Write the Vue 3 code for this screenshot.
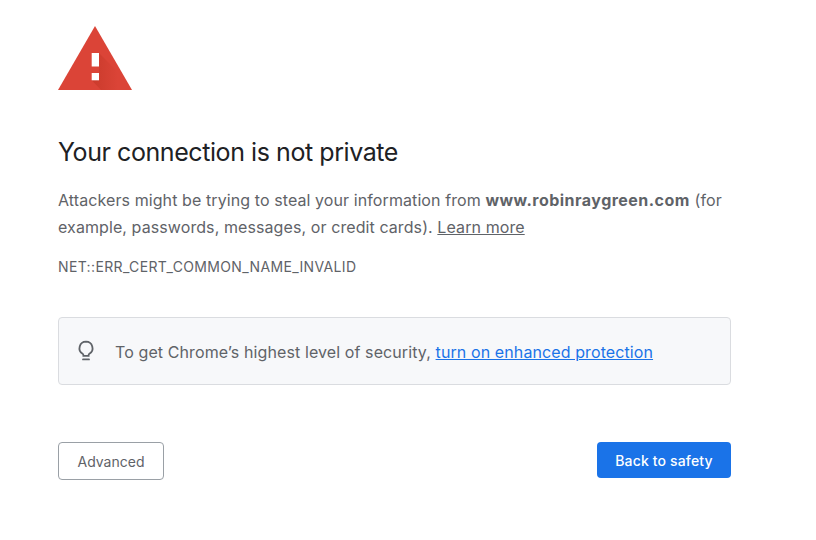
<script setup>
const domain = 'www.robinraygreen.com'
const errorCode = 'NET::ERR_CERT_COMMON_NAME_INVALID'
</script>

<template>
  <div class="page">
    <svg class="warning" width="74" height="64" viewBox="0 0 74 64">
      <defs>
        <linearGradient id="bangShadow" x1="0" y1="0" x2="1" y2="0">
          <stop offset="0" stop-color="#a52714" stop-opacity="0.32" />
          <stop offset="1" stop-color="#a52714" stop-opacity="0" />
        </linearGradient>
      </defs>
      <path d="M37 0 L74 64 L0 64 Z" fill="#db4437" />
      <path d="M41 27 L60 46 L60 64 L43 64 L33.7 54.3 L41 47 L41 40.5 Z" fill="url(#bangShadow)" />
      <rect x="33.7" y="27" width="7.3" height="13.5" fill="#fff" />
      <rect x="33.7" y="47" width="7.3" height="7.3" fill="#fff" />
    </svg>
    <h1 class="title">Your connection is not private</h1>
    <p class="message">
      Attackers might be trying to steal your information from <strong>{{ domain }}</strong> (for
      example, passwords, messages, or credit cards). <a class="learn" href="#">Learn more</a>
    </p>
    <div class="code">{{ errorCode }}</div>
    <div class="promo">
      <svg class="bulb" width="18" height="22" viewBox="0 0 18 22" fill="none" stroke="#5f6368" stroke-width="1.8">
        <path d="M9 1.6a6.6 6.6 0 0 0-3.4 12.2c.5.3.8.8.8 1.4v.6h5.2v-.6c0-.6.3-1.1.8-1.4A6.6 6.6 0 0 0 9 1.6Z" />
        <path d="M6 19.4h6" stroke-linecap="round" />
      </svg>
      <span class="promo-text">To get Chrome’s highest level of security, <a class="link" href="#">turn on enhanced protection</a></span>
    </div>
    <div class="actions">
      <button class="btn advanced">Advanced</button>
      <button class="btn safety">Back to safety</button>
    </div>
  </div>
</template>

<style>
html, body {
  background: #fff;
}
</style>

<style scoped>
.page {
  width: 673px;
  height: 540px;
  box-sizing: border-box;
  margin-left: 58px;
  padding-top: 26px;
  font-family: Inter, "Liberation Sans", sans-serif;
  color: #5f6368;
  overflow: hidden;
}
.warning {
  display: block;
}
.title {
  margin: 45px 0 0;
  font-size: 25px;
  line-height: 34px;
  font-weight: 400;
  color: #202124;
  letter-spacing: -0.43px;
}
.message {
  margin: 18px 0 0;
  font-size: 16px;
  line-height: 27px;
  letter-spacing: 0.09px;
}
.message strong {
  font-weight: 700;
  letter-spacing: 0.48px;
}
.learn {
  color: #5f6368;
}
.code {
  margin-top: 18px;
  font-size: 14px;
  line-height: 16px;
  letter-spacing: 0.36px;
}
.promo {
  display: flex;
  align-items: center;
  gap: 20px;
  margin-top: 42px;
  height: 68px;
  box-sizing: border-box;
  padding-left: 18px;
  background: #f7f8fa;
  border: 1px solid #dadce0;
  border-radius: 4px;
  font-size: 16px;
}
.promo-text {
  letter-spacing: 0.1px;
  padding-top: 2px;
}
.link {
  color: #1a73e8;
}
.actions {
  display: flex;
  justify-content: space-between;
  align-items: flex-start;
  margin-top: 57px;
}
.btn {
  font-family: inherit;
  font-size: 14px;
  border-radius: 4px;
}
.advanced {
  width: 106px;
  height: 38px;
  background: #fff;
  color: #5f6368;
  border: 1px solid #9aa0a6;
}
.safety {
  width: 134px;
  height: 36px;
  background: #1a73e8;
  color: #fff;
  border: 0;
  font-weight: 500;
  letter-spacing: 0.15px;
}
</style>
